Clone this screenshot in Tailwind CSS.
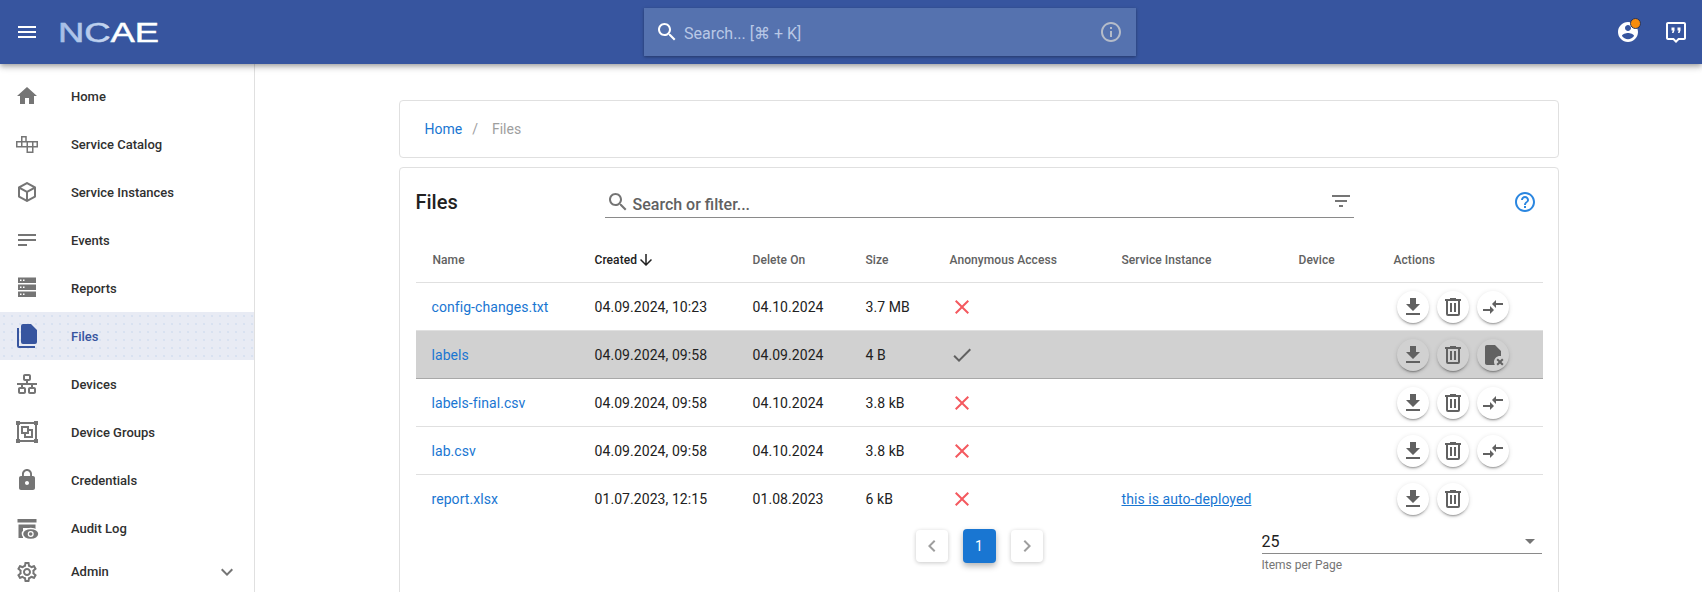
<!DOCTYPE html>
<html lang="en">
<head>
  <meta charset="UTF-8" />
  <title>Files</title>
  <script src="https://cdn.jsdelivr.net/npm/@tailwindcss/browser@4"></script>
</head>
<body class="h-screen overflow-hidden flex flex-col bg-white text-[#212121] font-[Roboto,sans-serif]">
  <!-- shared icons -->
  <svg class="hidden">
    <symbol id="i-download" viewBox="0 0 24 24"><path d="M19 9h-4V3H9v6H5l7 7 7-7zM5 18v2h14v-2H5z"/></symbol>
    <symbol id="i-trash" viewBox="0 0 24 24"><path d="M9 3v1H4v2h1v13a2 2 0 0 0 2 2h10a2 2 0 0 0 2-2V6h1V4h-5V3H9M7 6h10v13H7V6m2 2v9h2V8H9m4 0v9h2V8h-2z"/></symbol>
    <symbol id="i-compare" viewBox="0 0 24 24"><path d="M9.01 14H2v2h7.01v3L13 15l-3.99-4v3zm5.98-1v-3H22V8h-7.01V5L11 9l3.99 4z"/></symbol>
    <symbol id="i-close" viewBox="0 0 24 24"><path d="M19 6.41 17.59 5 12 10.59 6.41 5 5 6.41 10.59 12 5 17.59 6.41 19 12 13.41 17.59 19 19 17.59 13.41 12z"/></symbol>
  </svg>

  <!-- header -->
  <header class="relative z-10 h-16 shrink-0 flex items-center bg-[#37559f] shadow-[0_2px_4px_-1px_rgba(0,0,0,.2),0_4px_5px_0_rgba(0,0,0,.14),0_1px_10px_0_rgba(0,0,0,.12)]">
    <svg class="ml-[15px] w-6 h-6 fill-white" viewBox="0 0 24 24"><path d="M3 18h18v-2H3v2zm0-5h18v-2H3v2zm0-7v2h18V6H3z"/></svg>
    <svg class="ml-[19px] w-[105px] h-[28px] overflow-visible" viewBox="0 0 105 28">
      <defs>
        <linearGradient id="logo-fill" x1="0" x2="1" y1="0" y2="0">
          <stop offset="0" stop-color="#a4bde6"/><stop offset="0.48" stop-color="#c3d4f0"/><stop offset="0.56" stop-color="#ffffff"/><stop offset="1" stop-color="#ffffff"/>
        </linearGradient>
      </defs>
      <text x="0" y="23.500" textLength="101" lengthAdjust="spacingAndGlyphs" font-family="Liberation Sans, sans-serif" font-weight="400" font-size="27" stroke="url(#logo-fill)" stroke-width="0.5" fill="url(#logo-fill)">NCAE</text>
    </svg>
    <div class="ml-[481px] w-[492px] h-12 flex items-center bg-[#5572af] shadow-[0_1px_3px_rgba(0,0,0,.35)]">
      <svg class="ml-[11px] w-6 h-6 fill-white" viewBox="0 0 24 24"><path d="M15.5 14h-.79l-.28-.27C15.41 12.59 16 11.11 16 9.5 16 5.91 13.09 3 9.5 3S3 5.91 3 9.5 5.91 16 9.5 16c1.61 0 3.09-.59 4.23-1.57l.27.28v.79l5 4.99L20.49 19l-4.99-5zm-6 0C7.01 14 5 11.99 5 9.5S7.01 5 9.5 5 14 7.01 14 9.5 11.99 14 9.5 14z"/></svg>
      <span class="ml-[5px] mt-1 text-base text-[#b9c8e6]">Search... [⌘ + K]</span>
      <svg class="ml-auto mr-[13px] w-6 h-6 fill-[#b5bcc9]" viewBox="0 0 24 24"><path d="M11 7h2v2h-2zm0 4h2v6h-2zm1-9C6.48 2 2 6.48 2 12s4.48 10 10 10 10-4.48 10-10S17.52 2 12 2zm0 18c-4.41 0-8-3.59-8-8s3.59-8 8-8 8 3.59 8 8-3.59 8-8 8z"/></svg>
    </div>
    <div class="ml-auto relative w-6 h-6 mr-6">
      <svg class="w-6 h-6 fill-white" viewBox="0 0 24 24"><path d="M12 2C6.48 2 2 6.48 2 12s4.48 10 10 10 10-4.48 10-10S17.52 2 12 2zm0 3c1.66 0 3 1.34 3 3s-1.34 3-3 3-3-1.34-3-3 1.34-3 3-3zm0 14.2c-2.5 0-4.71-1.28-6-3.22.03-1.99 4-3.08 6-3.08 1.99 0 5.97 1.09 6 3.08-1.29 1.94-3.5 3.22-6 3.22z"/></svg>
      <span class="absolute left-[14px] top-[-2px] w-[11px] h-[11px] rounded-full bg-[#f78c0c] border border-[#24345f]"></span>
    </div>
    <svg class="mr-[14px] w-6 h-6 fill-white" viewBox="0 0 24 24"><path d="M20 2H4c-1.1 0-2 .9-2 2v14c0 1.1.9 2 2 2h5l3 3 3-3h5c1.1 0 2-.9 2-2V4c0-1.1-.9-2-2-2zm0 16h-5.83L12 20.17 9.83 18H4V4h16v14z"/><path d="M7.500 7.500h3v3l-1 2.500H8l.7-2.500H7.500zM13.500 7.500h3v3l-1 2.500H14l.7-2.500h-1.200z"/></svg>
  </header>

  <div class="flex flex-1 min-h-0">
    <!-- sidebar -->
    <nav class="w-[255px] shrink-0 border-r border-[#e0e0e0] pt-2 text-[13px] font-medium text-[#303030] overflow-hidden">
      <a class="h-12 flex items-center"><svg class="ml-[15px] w-6 h-6 fill-[#757575]" viewBox="0 0 24 24"><path d="M10 20v-6h4v6h5v-8h3L12 3 2 12h3v8z"/></svg><span class="ml-8 mt-[1px]">Home</span></a>
      <a class="h-12 flex items-center"><svg class="ml-[15px] w-6 h-6 fill-none stroke-[#757575] stroke-[1.5]" viewBox="0 0 24 24"><path d="M6.750 4.750h4.250v5h-4.250zM1.750 9.750h5v5h-5zM6.750 9.750h5.500v5h-5.500zM12.250 9.750h5.500v5h-5.500zM17.750 9.750h4.500v5h-4.500zM12.250 14.750h5.500v5.500h-5.500z"/></svg><span class="ml-8 mt-[1px]">Service Catalog</span></a>
      <a class="h-12 flex items-center"><svg class="ml-[15px] w-6 h-6 fill-[#757575]" viewBox="0 0 24 24"><path d="M21 16.500c0 .38-.21.71-.53.88l-7.900 4.440c-.16.12-.36.18-.57.18-.21 0-.41-.06-.57-.18l-7.900-4.440A.991.991 0 0 1 3 16.500v-9c0-.38.21-.71.53-.88l7.900-4.440c.16-.12.36-.18.57-.18.21 0 .41.06.57.18l7.900 4.440c.32.17.53.5.53.88v9M12 4.150 6.040 7.500 12 10.850l5.960-3.350L12 4.150M5 15.910l6 3.380v-6.710L5 9.210v6.700M19 15.910v-6.700l-6 3.370v6.710l6-3.380z"/></svg><span class="ml-8 mt-[1px]">Service Instances</span></a>
      <a class="h-12 flex items-center"><svg class="ml-[15px] w-6 h-6 fill-[#757575]" viewBox="0 0 24 24"><path d="M3 18h9v-2H3v2zM3 6v2h18V6H3zm0 7h18v-2H3v2z"/></svg><span class="ml-8 mt-[1px]">Events</span></a>
      <a class="h-12 flex items-center"><svg class="ml-[15px] w-6 h-6 fill-[#757575]" viewBox="0 0 24 24"><path fill-rule="evenodd" d="M3 1.500h18v5.500H3zM3 8.500h18v5.500H3zM3 15.500h18v5.500H3zM5 3.500v1.500h1.500V3.500zM8 3.500v1.500h1.500V3.500zM5 10.500V12h1.500v-1.500zM8 10.500V12h1.500v-1.500zM5 17.500V19h1.500v-1.500zM8 17.500V19h1.500v-1.500z"/></svg><span class="ml-8 mt-[1px]">Reports</span></a>
      <a class="h-12 flex items-center text-[#37559f] bg-[#e8ebf4] bg-[radial-gradient(#c6d6ec_0.6px,transparent_0.8px)] bg-[length:8px_8px]"><svg class="ml-[15px] w-6 h-6 fill-[#37559f]" viewBox="0 0 24 24"><path d="M8 0h8l6 6v12a2 2 0 0 1-2 2H8a2 2 0 0 1-2-2V2a2 2 0 0 1 2-2M4 4v18h16v2H4a2 2 0 0 1-2-2V4h2z"/></svg><span class="ml-8 mt-[1px]">Files</span></a>
      <a class="h-12 flex items-center"><svg class="ml-[15px] w-6 h-6 fill-[#757575]" viewBox="0 0 24 24"><path d="M10 2c-1.110 0-2 .89-2 2v3c0 1.110.89 2 2 2h1v2H2v2h4v2H5c-1.110 0-2 .89-2 2v3c0 1.110.89 2 2 2h4c1.110 0 2-.89 2-2v-3c0-1.110-.89-2-2-2H8v-2h8v2h-1c-1.110 0-2 .89-2 2v3c0 1.110.89 2 2 2h4c1.110 0 2-.89 2-2v-3c0-1.110-.89-2-2-2h-1v-2h4v-2h-9V9h1c1.110 0 2-.89 2-2V4c0-1.110-.89-2-2-2h-4m0 2h4v3h-4V4M5 17h4v3H5v-3m10 0h4v3h-4v-3z"/></svg><span class="ml-8 mt-[1px]">Devices</span></a>
      <a class="h-12 flex items-center"><svg class="ml-[15px] w-6 h-6 fill-[#757575]" viewBox="0 0 24 24"><path d="M1 1v4h1v14H1v4h4v-1h14v1h4v-4h-1V5h1V1h-4v1H5V1M5 4h14v1h1v14h-1v1H5v-1H4V5h1M6 6v8h3v4h9V9h-4V6M8 8h4v4H8M14 11h2v5h-5v-2h3z"/></svg><span class="ml-8 mt-[1px]">Device Groups</span></a>
      <a class="h-12 flex items-center"><svg class="ml-[15px] w-6 h-6 fill-[#757575]" viewBox="0 0 24 24"><path d="M18 8h-1V6c0-2.760-2.240-5-5-5S7 3.240 7 6v2H6c-1.100 0-2 .9-2 2v10c0 1.100.9 2 2 2h12c1.100 0 2-.9 2-2V10c0-1.100-.9-2-2-2zm-6 9c-1.100 0-2-.9-2-2s.9-2 2-2 2 .9 2 2-.9 2-2 2zm3.100-9H8.900V6c0-1.710 1.390-3.100 3.100-3.100 1.710 0 3.100 1.390 3.100 3.100v2z"/></svg><span class="ml-8 mt-[1px]">Credentials</span></a>
      <a class="h-12 flex items-center"><svg class="ml-[15px] w-6 h-6 fill-[#757575]" viewBox="0 0 24 24"><path d="M2.500 3h19v3.500h-19zM3.500 8.500h17V22h-17zM8 12v10h8V12z" fill-rule="evenodd"/><ellipse cx="15.700" cy="18" rx="9" ry="6.200" fill="#ffffff"/><ellipse cx="15.700" cy="18" rx="7.500" ry="4.800"/><circle cx="15.700" cy="18" r="3" fill="#ffffff"/><circle cx="15.700" cy="18" r="1.800"/></svg><span class="ml-8 mt-[1px]">Audit Log</span></a>
      <a class="h-10 flex items-center"><svg class="ml-[15px] w-6 h-6 fill-[#757575]" viewBox="0 0 24 24"><path d="M19.430 12.980c.04-.32.07-.64.07-.98 0-.34-.03-.66-.07-.98l2.110-1.650c.19-.15.24-.42.12-.64l-2-3.460c-.09-.16-.26-.25-.44-.25-.06 0-.12.01-.17.03l-2.490 1c-.52-.4-1.080-.73-1.690-.98l-.38-2.650C14.460 2.180 14.250 2 14 2h-4c-.25 0-.46.18-.49.42l-.38 2.650c-.61.25-1.170.59-1.690.98l-2.490-1c-.06-.02-.12-.03-.18-.03-.17 0-.34.09-.43.25l-2 3.460c-.13.22-.07.49.12.64l2.110 1.650c-.04.32-.07.65-.07.98 0 .33.03.66.07.98l-2.110 1.650c-.19.15-.24.42-.12.64l2 3.460c.09.16.26.25.44.25.06 0 .12-.01.17-.03l2.490-1c.52.4 1.080.73 1.690.98l.38 2.650c.03.24.24.42.49.42h4c.25 0 .46-.18.49-.42l.38-2.650c.61-.25 1.170-.59 1.690-.98l2.490 1c.06.02.12.03.18.03.17 0 .34-.09.43-.25l2-3.460c.12-.22.07-.49-.12-.64l-2.110-1.650zm-1.980-1.710c.04.31.05.52.05.73 0 .21-.02.43-.05.73l-.14 1.130.89.7 1.080.84-.7 1.210-1.270-.51-1.040-.42-.9.68c-.43.32-.84.56-1.250.73l-1.060.43-.16 1.130-.2 1.350h-1.400l-.19-1.350-.16-1.130-1.060-.43c-.43-.18-.83-.41-1.230-.71l-.91-.7-1.060.43-1.270.51-.7-1.210 1.080-.84.89-.7-.14-1.130c-.03-.31-.05-.54-.05-.74s.02-.43.05-.73l.14-1.130-.89-.7-1.080-.84.7-1.210 1.270.51 1.040.42.9-.68c.43-.32.84-.56 1.250-.73l1.060-.43.16-1.130.2-1.350h1.390l.19 1.350.16 1.130 1.060.43c.43.18.83.41 1.230.71l.91.7 1.060-.43 1.270-.51.7 1.210-1.070.85-.89.7.14 1.130zM12 8c-2.210 0-4 1.790-4 4s1.790 4 4 4 4-1.790 4-4-1.790-4-4-4zm0 6c-1.100 0-2-.9-2-2s.9-2 2-2 2 .9 2 2-.9 2-2 2z"/></svg><span class="ml-8">Admin</span><svg class="ml-auto mr-[15px] w-6 h-6 fill-[#757575]" viewBox="0 0 24 24"><path d="M16.590 8.590 12 13.170 7.410 8.590 6 10l6 6 6-6z"/></svg></a>
    </nav>

    <!-- main -->
    <main class="flex-1 min-w-0 overflow-hidden pt-9">
      <div class="w-[1160px] mx-auto flex flex-col gap-[9px]">
        <div class="h-[58px] flex items-center pl-[25px] text-sm bg-white border border-[#e0e0e0] rounded">
          <span class="text-[#1976d2]">Home</span><span class="ml-[10px] text-[#9e9e9e]">/</span><span class="ml-[14px] text-[#9e9e9e]">Files</span>
        </div>

        <section class="bg-white border border-[#e0e0e0] rounded pb-10">
          <div class="h-[67px] flex items-center pl-4">
            <h1 class="w-[189px] text-xl font-medium leading-none">Files</h1>
            <div class="w-[749px] h-[33px] flex items-center border-b border-[#8a8a8a] text-[#616161]">
              <svg class="ml-[1px] mt-[1px] w-6 h-6 fill-[#757575]" viewBox="0 0 24 24"><path d="M15.500 14h-.79l-.28-.27C15.410 12.590 16 11.110 16 9.500 16 5.910 13.090 3 9.500 3S3 5.910 3 9.500 5.910 16 9.500 16c1.610 0 3.090-.59 4.230-1.570l.27.28v.79l5 4.990L20.490 19l-4.990-5zm-6 0C7.010 14 5 11.990 5 9.500S7.010 5 9.500 5 14 7.010 14 9.500 11.990 14 9.500 14z"/></svg>
              <span class="ml-[3px] mt-2 text-base font-medium">Search or filter...</span>
              <svg class="ml-auto mr-[1px] w-6 h-6 fill-[#757575]" viewBox="0 0 24 24"><path d="M10 18h4v-2h-4v2zM3 6v2h18V6H3zm3 7h12v-2H6v2z"/></svg>
            </div>
            <svg class="ml-[159px] w-6 h-6 fill-[#2a86e0]" viewBox="0 0 24 24"><path d="M11 18h2v-2h-2v2zm1-16C6.480 2 2 6.480 2 12s4.480 10 10 10 10-4.480 10-10S17.520 2 12 2zm0 18c-4.410 0-8-3.590-8-8s3.590-8 8-8 8 3.590 8 8-3.590 8-8 8zm0-14c-2.210 0-4 1.790-4 4h2c0-1.100.9-2 2-2s2 .9 2 2c0 2-3 1.750-3 5h2c0-2.250 3-2.500 3-5 0-2.210-1.790-4-4-4z"/></svg>
          </div>

          <table class="ml-4 w-[1127px] table-fixed border-collapse text-sm tracking-[.005em] [&_td]:pt-[2px]">
            <colgroup>
              <col class="w-[163px]"/><col class="w-[158px]"/><col class="w-[113px]"/><col class="w-[84px]"/><col class="w-[171px]"/><col class="w-[177px]"/><col class="w-[96px]"/><col class="w-[165px]"/>
            </colgroup>
            <thead>
              <tr class="h-[47px] text-left text-xs font-medium text-[#616161] border-b border-[#e0e0e0] [&_th]:pt-[3px]">
                <th class="pl-[17px] font-medium">Name</th>
                <th class="pl-4 font-medium text-[#212121]"><span class="inline-flex items-center">Created<svg class="w-[18px] h-[18px] fill-[#212121]" viewBox="0 0 24 24"><path d="M20 12l-1.410-1.410L13 16.170V4h-2v12.170l-5.580-5.590L4 12l8 8 8-8z"/></svg></span></th>
                <th class="pl-4 font-medium">Delete On</th>
                <th class="pl-4 font-medium">Size</th>
                <th class="pl-4 font-medium">Anonymous Access</th>
                <th class="pl-[17px] font-medium">Service Instance</th>
                <th class="pl-[17px] font-medium">Device</th>
                <th class="pl-4 font-medium">Actions</th>
              </tr>
            </thead>
            <tbody>
              <tr class="h-12 border-b border-[#e0e0e0]">
                <td class="pl-4 text-[#1976d2]">config-changes.txt</td><td class="pl-4">04.09.2024, 10:23</td><td class="pl-4">04.10.2024</td><td class="pl-4">3.7 MB</td>
                <td class="pl-4"><svg class="w-6 h-6 fill-[#f4595f]"><use href="#i-close"/></svg></td><td></td><td></td>
                <td class="pl-[19px]"><div class="flex gap-2">
                  <span class="w-8 h-8 flex items-center justify-center rounded-full bg-white shadow-[0_3px_1px_-2px_rgba(0,0,0,.2),0_2px_2px_0_rgba(0,0,0,.14),0_1px_5px_0_rgba(0,0,0,.12)]"><svg class="w-6 h-6 fill-[#616161]"><use href="#i-download"/></svg></span>
                  <span class="w-8 h-8 flex items-center justify-center rounded-full bg-white shadow-[0_3px_1px_-2px_rgba(0,0,0,.2),0_2px_2px_0_rgba(0,0,0,.14),0_1px_5px_0_rgba(0,0,0,.12)]"><svg class="w-6 h-6 fill-[#616161]"><use href="#i-trash"/></svg></span>
                  <span class="w-8 h-8 flex items-center justify-center rounded-full bg-white shadow-[0_3px_1px_-2px_rgba(0,0,0,.2),0_2px_2px_0_rgba(0,0,0,.14),0_1px_5px_0_rgba(0,0,0,.12)]"><svg class="w-6 h-6 fill-[#616161]"><use href="#i-compare"/></svg></span>
                </div></td>
              </tr>
              <tr class="h-12 bg-[#d1d1d1] border-b border-[#a8a8a8]">
                <td class="pl-4 text-[#1976d2]">labels</td><td class="pl-4">04.09.2024, 09:58</td><td class="pl-4">04.09.2024</td><td class="pl-4">4 B</td>
                <td class="pl-4"><svg class="w-6 h-6 fill-[#616161]" viewBox="0 0 24 24"><path d="M9 16.170 4.830 12l-1.420 1.410L9 19 21 7l-1.410-1.410z"/></svg></td><td></td><td></td>
                <td class="pl-[19px]"><div class="flex gap-2">
                  <span class="w-8 h-8 flex items-center justify-center rounded-full bg-[#d1d1d1] shadow-[0_3px_1px_-2px_rgba(0,0,0,.2),0_2px_2px_0_rgba(0,0,0,.14),0_1px_5px_0_rgba(0,0,0,.12)]"><svg class="w-6 h-6 fill-[#616161]"><use href="#i-download"/></svg></span>
                  <span class="w-8 h-8 flex items-center justify-center rounded-full bg-[#d1d1d1] shadow-[0_3px_1px_-2px_rgba(0,0,0,.2),0_2px_2px_0_rgba(0,0,0,.14),0_1px_5px_0_rgba(0,0,0,.12)]"><svg class="w-6 h-6 fill-[#616161]"><use href="#i-trash"/></svg></span>
                  <span class="w-8 h-8 flex items-center justify-center rounded-full bg-[#d1d1d1] shadow-[0_3px_1px_-2px_rgba(0,0,0,.2),0_2px_2px_0_rgba(0,0,0,.14),0_1px_5px_0_rgba(0,0,0,.12)]"><svg class="w-6 h-6 fill-[#616161]" viewBox="0 0 24 24"><path d="M13.810 22H6c-1.110 0-2-.89-2-2V4c0-1.100.89-2 2-2h8l6 6v5.090c-.33-.05-.66-.09-1-.09-3.310 0-6 2.690-6 6 0 1.070.29 2.070.81 3M21.120 15.460 19 17.590l-2.120-2.130-1.410 1.420L17.590 19l-2.120 2.120 1.410 1.420L19 20.410l2.120 2.130 1.420-1.420L20.410 19l2.130-2.120-1.420-1.420z"/></svg></span>
                </div></td>
              </tr>
              <tr class="h-12 border-b border-[#e0e0e0]">
                <td class="pl-4 text-[#1976d2]">labels-final.csv</td><td class="pl-4">04.09.2024, 09:58</td><td class="pl-4">04.10.2024</td><td class="pl-4">3.8 kB</td>
                <td class="pl-4"><svg class="w-6 h-6 fill-[#f4595f]"><use href="#i-close"/></svg></td><td></td><td></td>
                <td class="pl-[19px]"><div class="flex gap-2">
                  <span class="w-8 h-8 flex items-center justify-center rounded-full bg-white shadow-[0_3px_1px_-2px_rgba(0,0,0,.2),0_2px_2px_0_rgba(0,0,0,.14),0_1px_5px_0_rgba(0,0,0,.12)]"><svg class="w-6 h-6 fill-[#616161]"><use href="#i-download"/></svg></span>
                  <span class="w-8 h-8 flex items-center justify-center rounded-full bg-white shadow-[0_3px_1px_-2px_rgba(0,0,0,.2),0_2px_2px_0_rgba(0,0,0,.14),0_1px_5px_0_rgba(0,0,0,.12)]"><svg class="w-6 h-6 fill-[#616161]"><use href="#i-trash"/></svg></span>
                  <span class="w-8 h-8 flex items-center justify-center rounded-full bg-white shadow-[0_3px_1px_-2px_rgba(0,0,0,.2),0_2px_2px_0_rgba(0,0,0,.14),0_1px_5px_0_rgba(0,0,0,.12)]"><svg class="w-6 h-6 fill-[#616161]"><use href="#i-compare"/></svg></span>
                </div></td>
              </tr>
              <tr class="h-12 border-b border-[#e0e0e0]">
                <td class="pl-4 text-[#1976d2]">lab.csv</td><td class="pl-4">04.09.2024, 09:58</td><td class="pl-4">04.10.2024</td><td class="pl-4">3.8 kB</td>
                <td class="pl-4"><svg class="w-6 h-6 fill-[#f4595f]"><use href="#i-close"/></svg></td><td></td><td></td>
                <td class="pl-[19px]"><div class="flex gap-2">
                  <span class="w-8 h-8 flex items-center justify-center rounded-full bg-white shadow-[0_3px_1px_-2px_rgba(0,0,0,.2),0_2px_2px_0_rgba(0,0,0,.14),0_1px_5px_0_rgba(0,0,0,.12)]"><svg class="w-6 h-6 fill-[#616161]"><use href="#i-download"/></svg></span>
                  <span class="w-8 h-8 flex items-center justify-center rounded-full bg-white shadow-[0_3px_1px_-2px_rgba(0,0,0,.2),0_2px_2px_0_rgba(0,0,0,.14),0_1px_5px_0_rgba(0,0,0,.12)]"><svg class="w-6 h-6 fill-[#616161]"><use href="#i-trash"/></svg></span>
                  <span class="w-8 h-8 flex items-center justify-center rounded-full bg-white shadow-[0_3px_1px_-2px_rgba(0,0,0,.2),0_2px_2px_0_rgba(0,0,0,.14),0_1px_5px_0_rgba(0,0,0,.12)]"><svg class="w-6 h-6 fill-[#616161]"><use href="#i-compare"/></svg></span>
                </div></td>
              </tr>
              <tr class="h-12">
                <td class="pl-4 text-[#1976d2]">report.xlsx</td><td class="pl-4">01.07.2023, 12:15</td><td class="pl-4">01.08.2023</td><td class="pl-4">6 kB</td>
                <td class="pl-4"><svg class="w-6 h-6 fill-[#f4595f]"><use href="#i-close"/></svg></td><td class="pl-[17px] text-[#1976d2] underline">this is auto-deployed</td><td></td>
                <td class="pl-[19px]"><div class="flex gap-2">
                  <span class="w-8 h-8 flex items-center justify-center rounded-full bg-white shadow-[0_3px_1px_-2px_rgba(0,0,0,.2),0_2px_2px_0_rgba(0,0,0,.14),0_1px_5px_0_rgba(0,0,0,.12)]"><svg class="w-6 h-6 fill-[#616161]"><use href="#i-download"/></svg></span>
                  <span class="w-8 h-8 flex items-center justify-center rounded-full bg-white shadow-[0_3px_1px_-2px_rgba(0,0,0,.2),0_2px_2px_0_rgba(0,0,0,.14),0_1px_5px_0_rgba(0,0,0,.12)]"><svg class="w-6 h-6 fill-[#616161]"><use href="#i-trash"/></svg></span>
                </div></td>
              </tr>
            </tbody>
          </table>

          <!-- pagination -->
          <div class="mt-[7px] flex items-start">
            <div class="ml-[516px] flex items-center gap-[15px]">
              <span class="w-8 h-8 flex items-center justify-center rounded bg-white shadow-[0_1px_4px_rgba(0,0,0,.22)]"><svg class="w-6 h-6 fill-[#9e9e9e]" viewBox="0 0 24 24"><path d="M15.410 7.410 14 6l-6 6 6 6 1.410-1.410L10.830 12z"/></svg></span>
              <span class="w-[33px] h-[34px] flex items-center justify-center rounded bg-[#1976d2] text-white text-sm shadow-[0_3px_6px_rgba(0,0,0,.3)]">1</span>
              <span class="w-8 h-8 flex items-center justify-center rounded bg-white shadow-[0_1px_4px_rgba(0,0,0,.22)]"><svg class="w-6 h-6 fill-[#9e9e9e]" viewBox="0 0 24 24"><path d="M10 6 8.590 7.410 13.170 12l-4.580 4.590L10 18l6-6z"/></svg></span>
            </div>
            <div class="ml-[219px] w-[280px]">
              <div class="h-[25px] flex items-center justify-between border-b border-[#8a8a8a] text-base leading-none">
                <span class="mt-[2px]">25</span>
                <svg class="w-6 h-6 fill-[#757575]" viewBox="0 0 24 24"><path d="M7 10l5 5 5-5z"/></svg>
              </div>
              <div class="mt-[3px] text-xs text-[#757575]">Items per Page</div>
            </div>
          </div>
        </section>
      </div>
    </main>
  </div>
</body>
</html>
